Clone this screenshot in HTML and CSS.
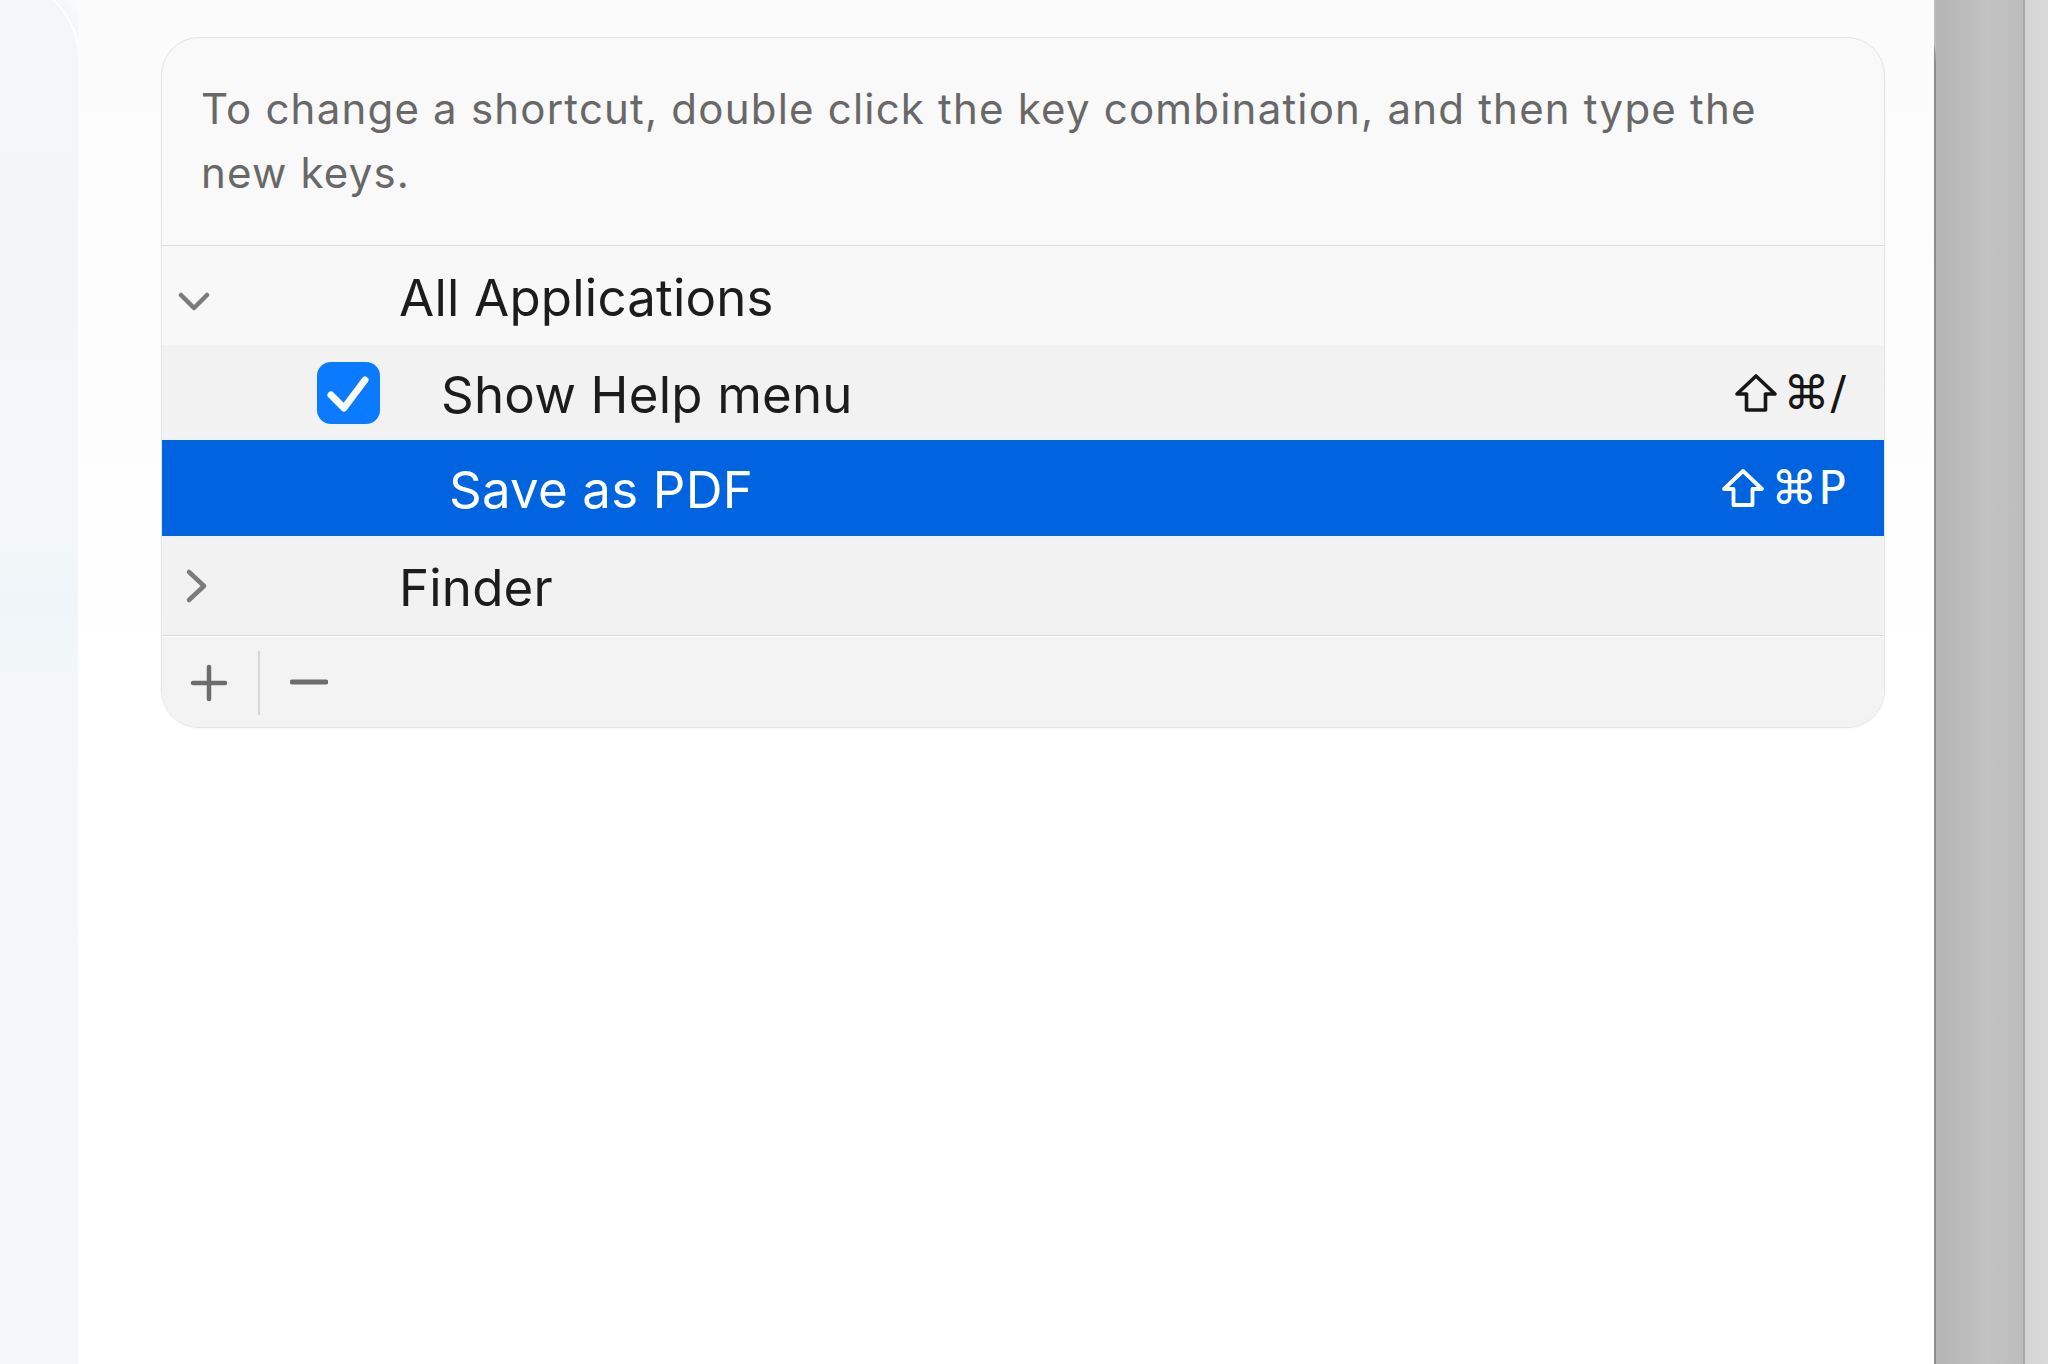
FILE: index.html
```html
<!DOCTYPE html>
<html lang="en">
<head>
<meta charset="utf-8">
<title>Keyboard Shortcuts</title>
<link rel="stylesheet" href="styles.css">
</head>
<body>
<div class="desktop">
  <div class="window">
    <aside class="sidebar"></aside>
    <main class="content">
      <section class="card">
        <p class="hint">To change a shortcut, double click the key combination, and then type the new keys.</p>
        <div class="list">
          <div class="row group open">
            <span class="twisty">
              <svg width="32" height="22" viewBox="0 0 32 22"><path d="M3 4 L16 17 L29 4" fill="none" stroke="#7b7b7b" stroke-width="4.5" stroke-linecap="round" stroke-linejoin="round"/></svg>
            </span>
            <span class="label">All Applications</span>
          </div>
          <div class="row item checked">
            <span class="check-cell">
              <span class="checkbox">
                <svg width="63" height="62" viewBox="0 0 63 62"><path d="M14 33 L27 46 L48 18" fill="none" stroke="#fff" stroke-width="7" stroke-linecap="round" stroke-linejoin="round"/></svg>
              </span>
            </span>
            <span class="label">Show Help menu</span>
            <span class="keys" aria-label="Shift Command /"><svg class="shift" width="44" height="40" viewBox="0 0 44 40"><path d="M22 3 L41 21 H31.5 V37 H12.5 V21 H3 Z" fill="none" stroke="currentColor" stroke-width="3.6" stroke-linejoin="round"/></svg><span class="kc">⌘/</span></span>
          </div>
          <div class="row item selected">
            <span class="label plain">Save as PDF</span>
            <span class="keys" aria-label="Shift Command P"><svg class="shift" width="44" height="40" viewBox="0 0 44 40"><path d="M22 3 L41 21 H31.5 V37 H12.5 V21 H3 Z" fill="none" stroke="currentColor" stroke-width="3.8" stroke-linejoin="round"/></svg><span class="kc">⌘P</span></span>
          </div>
          <div class="row group closed">
            <span class="twisty">
              <svg width="26" height="36" viewBox="0 0 26 36"><path d="M5 4 L20 18 L5 32" fill="none" stroke="#7b7b7b" stroke-width="4.5" stroke-linecap="round" stroke-linejoin="round"/></svg>
            </span>
            <span class="label">Finder</span>
          </div>
        </div>
        <div class="footer">
          <button class="tool add" aria-label="Add">
            <svg width="38" height="38" viewBox="0 0 38 38"><path d="M19 3 V35 M3 19 H35" stroke="#6c6c6c" stroke-width="4.5" stroke-linecap="round"/></svg>
          </button>
          <span class="tool-sep"></span>
          <button class="tool remove" aria-label="Remove">
            <svg width="38" height="38" viewBox="0 0 38 38"><path d="M2 18 H36" stroke="#6c6c6c" stroke-width="4.8" stroke-linecap="round"/></svg>
          </button>
        </div>
      </section>
    </main>
  </div>
  <div class="gutter"></div>
  <div class="edge"></div>
</div>
</body>
</html>
```
FILE: styles.css
```css
html, body {
  margin: 0;
  padding: 0;
}
body {
  width: 2048px;
  height: 1364px;
  overflow: hidden;
  font-family: "Inter", "Noto Sans", "Liberation Sans", sans-serif;
  background: #bdbdbd;
}
.desktop {
  display: flex;
  height: 1364px;
}
.window {
  width: 1934px;
  flex: none;
  margin-top: -55px;
  height: 1419px;
  background: #ffffff;
  border-top-right-radius: 120px;
  border-right: 2px solid #8d8d8d;
  display: flex;
  box-sizing: content-box;
}
.sidebar {
  width: 78px;
  flex: none;
  margin-top: 35px;
  border-top-right-radius: 90px;
  background: linear-gradient(180deg, #f4f6f8 0%, #f3f7f9 40%, #eff6f9 45%, #f4f7f9 52%, #f5f7f9 100%);
  box-shadow: 2px 0 0 #ffffff, 20px 0 40px rgba(205, 214, 224, 0.28);
}
.content {
  flex: 1;
  padding-top: 92px;
  padding-left: 83px;
  background: linear-gradient(180deg, #fbfbfb 0px, #fdfdfd 400px, #ffffff 800px);
}
.card {
  width: 1724px;
  box-sizing: border-box;
  border: 1px solid #e4e4e4;
  border-radius: 38px;
  background: #f9f9f9;
  overflow: hidden;
  box-shadow: 0 1px 2px rgba(0, 0, 0, 0.03);
}
.hint {
  margin: 0;
  padding: 39px 60px 40px 39px;
  font-size: 42px;
  line-height: 64px;
  letter-spacing: 1.2px;
  color: #686868;
}
.list {
  border-top: 1px solid #dedede;
}
.row {
  display: flex;
  align-items: center;
  box-sizing: border-box;
  padding-right: 40px;
  color: #1c1c1c;
  font-size: 51px;
  letter-spacing: 0.2px;
}
.row .label {
  flex: 1;
  white-space: nowrap;
  padding-top: 3px;
}
.row.open {
  height: 99px;
  background: #f8f8f8;
}
.row.checked {
  height: 95px;
  background: #f2f2f2;
}
.row.selected {
  height: 96px;
  background: #0064e1;
  color: #ffffff;
}
.row.closed {
  height: 99px;
  background: #f2f2f2;
}
.twisty {
  width: 237px;
  flex: none;
  box-sizing: border-box;
  padding-left: 16px;
  display: flex;
  align-items: center;
}
.row.open .twisty {
  padding-top: 12px;
}
.row.closed .twisty {
  padding-left: 22px;
}
.check-cell {
  width: 155px;
  flex: none;
  box-sizing: border-box;
  padding-left: 155px;
}
.checkbox {
  display: flex;
  width: 63px;
  height: 62px;
  border-radius: 14px;
  background: #0a7bff;
}
.row.checked .label {
  margin-left: 124px;
}
.label.plain {
  padding-left: 287px;
}
.keys {
  display: flex;
  align-items: center;
  color: #161616;
  white-space: nowrap;
  margin-right: -3px;
}
.row.selected .keys {
  color: #ffffff;
}
.keys .shift {
  margin-right: 6px;
}
.kc {
  font-family: "DejaVu Sans", "Inter", sans-serif;
  font-size: 46px;
  letter-spacing: 1px;
}
.footer {
  display: flex;
  align-items: center;
  height: 92px;
  border-top: 1px solid #dcdcdc;
  box-shadow: inset 0 1px 0 #ffffff;
  background: #f3f3f3;
  padding-left: 28px;
  padding-top: 3px;
  box-sizing: border-box;
}
.tool {
  border: 0;
  background: transparent;
  padding: 0;
  display: flex;
  width: 38px;
  height: 38px;
}
.tool-sep {
  width: 2px;
  height: 64px;
  background: #d6d6d6;
  margin: 0 30px 0 30px;
}
.gutter {
  width: 87px;
  flex: none;
  background: linear-gradient(90deg, #b4b4b4, #c2c2c2 60%, #bdbdbd);
}
.edge {
  flex: 1;
  border-left: 2px solid #a7a7a7;
  background: linear-gradient(90deg, #d3d3d3, #dadada);
}
```
